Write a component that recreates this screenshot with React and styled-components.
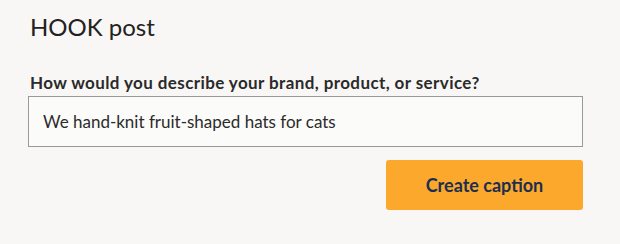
import styled, { createGlobalStyle } from "styled-components";

const Global = createGlobalStyle`
  body {
    margin: 0;
    background: #f8f7f5;
    font-family: "Lato", "Liberation Sans", sans-serif;
  }
`;

const Page = styled.section`
  width: 620px;
  height: 244px;
  box-sizing: border-box;
  padding: 10px 37px 0 28px;
  display: flex;
  flex-direction: column;
`;

const Title = styled.h1`
  margin: 0 0 0 2px;
  font-size: 24px;
  line-height: 34px;
  font-weight: 400;
  color: #222;
`;

const Label = styled.label`
  margin: 29px 0 0 2px;
  font-size: 17px;
  line-height: 20px;
  letter-spacing: 0.4px;
  font-weight: 700;
  color: #2a2a2a;
`;

const Field = styled.div`
  margin-top: 3px;
  height: 51px;
  box-sizing: border-box;
  border: 1px solid #999;
  background: #fbfbfa;
  display: flex;
  align-items: center;
  padding: 0 14px;
  font-size: 17px;
  color: #2b2b2b;
`;

const Actions = styled.div`
  display: flex;
  justify-content: flex-end;
  margin-top: 13px;
`;

const Button = styled.button`
  width: 197px;
  height: 50px;
  border: none;
  border-radius: 3px;
  background: #fba82c;
  color: #1c2f50;
  font-family: inherit;
  font-size: 18px;
  font-weight: 700;
  cursor: pointer;
`;

export default function App() {
  return (
    <>
      <Global />
      <Page>
        <Title>HOOK post</Title>
        <Label>How would you describe your brand, product, or service?</Label>
        <Field>We hand-knit fruit-shaped hats for cats</Field>
        <Actions>
          <Button>Create caption</Button>
        </Actions>
      </Page>
    </>
  );
}
